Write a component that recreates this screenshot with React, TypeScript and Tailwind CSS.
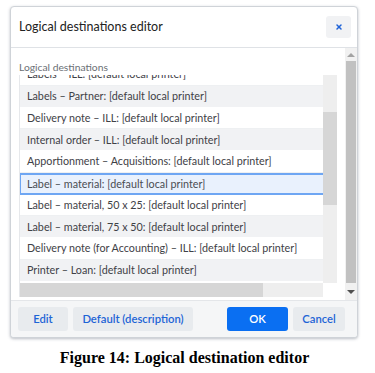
import { X } from "lucide-react";

const rows = [
  "Labels – ILL: [default local printer]",
  "Labels – Partner: [default local printer]",
  "Delivery note – ILL: [default local printer]",
  "Internal order – ILL: [default local printer]",
  "Apportionment – Acquisitions: [default local printer]",
  "Label – material: [default local printer]",
  "Label – material, 50 x 25: [default local printer]",
  "Label – material, 75 x 50: [default local printer]",
  "Delivery note (for Accounting) – ILL: [default local printer]",
  "Printer – Loan: [default local printer]",
];

const SELECTED = 5;

export default function App() {
  return (
    <div className="h-[373px] w-[375px] overflow-hidden bg-white font-['Lato',sans-serif]">
      <div className="pl-[10px] pt-[6px]">
        {/* Dialog */}
        <div className="flex h-[332px] w-[348px] flex-col overflow-hidden rounded-[4px] border border-[#cfd3d8] bg-white shadow-[0_1px_3px_rgba(60,70,90,0.35)]">
          {/* Header */}
          <div className="flex h-[41px] shrink-0 items-center justify-between border-b border-[#dfe2e6] pl-[8px] pr-[6px]">
            <span className="text-[12.5px] text-[#222222]">Logical destinations editor</span>
            <button className="flex h-[22px] w-[25px] items-center justify-center rounded-[3px] bg-[#f1f2f4]">
              <X className="h-[8px] w-[8px] text-[#1f63d8]" strokeWidth={4.5} />
            </button>
          </div>

          {/* Body */}
          <div className="flex h-[252px] shrink-0">
            <div className="flex-1 pl-[8px] pt-[13px]">
              <div className="h-[14px] text-[10.3px] leading-[13px] text-[#6b6f75]">Logical destinations</div>
              <div className="flex h-[222px] w-[318px] flex-col border-l border-[#e6e8eb]">
                <div className="flex h-[208px]">
                  <div className="w-[304px] overflow-hidden">
                    <div className="-mt-[11px]">
                      {rows.map((r, i) => (
                        <div
                          key={r}
                          className={
                            i === SELECTED
                              ? "flex h-[21.75px] items-center whitespace-nowrap border-y-2 border-l border-[#6ea6f3] bg-[#e9f1fd] pl-[6px] text-[10.75px] text-[#4a4d52]"
                              : i % 2 === 1
                                ? "flex h-[21.75px] items-center whitespace-nowrap border-b border-[#ffffff] bg-[#f1f2f4] pl-[7px] text-[10.75px] text-[#3e4146]"
                                : "flex h-[21.75px] items-center whitespace-nowrap border-b border-[#eef0f2] bg-white pl-[7px] text-[10.75px] text-[#3e4146]"
                          }
                        >
                          {r}
                        </div>
                      ))}
                    </div>
                  </div>
                  {/* inner vertical scrollbar */}
                  <div className="flex w-[14px] flex-col bg-[#eeeeee]">
                    <div className="h-[37px]" />
                    <div className="h-[93px] bg-[#d6d6d6]" />
                  </div>
                </div>
                {/* inner horizontal scrollbar */}
                <div className="flex h-[14px]">
                  <div className="w-[304px] bg-[#eeeeee]">
                    <div className="h-full w-[243px] bg-[#d6d6d6]" />
                  </div>
                  <div className="w-[14px] bg-white" />
                </div>
              </div>
            </div>
            {/* outer scrollbar */}
            <div className="flex w-[12px] flex-col items-center bg-[#f1f1f1]">
              <div className="flex h-[13px] items-center justify-center">
                <div className="h-0 w-0 border-x-[4px] border-b-[4px] border-x-transparent border-b-[#a3a3a3]" />
              </div>
              <div className="h-[222px] w-[10px] bg-[#c1c1c1]" />
              <div className="flex h-[17px] items-center justify-center">
                <div className="h-0 w-0 border-x-[4px] border-t-[4px] border-x-transparent border-t-[#505050]" />
              </div>
            </div>
          </div>

          {/* Footer */}
          <div className="flex flex-1 items-center border-t border-[#e4e6e9] bg-[#f5f6f7] pl-[7px] pr-[12px]">
            <div className="flex gap-[5px]">
              <button className="h-[24px] w-[50px] rounded-[3px] bg-[#e8ebee] text-[11.25px] font-semibold text-[#1d64d6]">Edit</button>
              <button className="h-[24px] w-[120px] rounded-[3px] bg-[#e8ebee] text-[11.25px] font-semibold text-[#1d64d6]">Default (description)</button>
            </div>
            <div className="ml-auto flex gap-[5px]">
              <button className="h-[24px] w-[61px] rounded-[3px] bg-[#0a6ff2] text-[11.25px] font-semibold text-white">OK</button>
              <button className="h-[24px] w-[52px] rounded-[3px] bg-[#e8ebee] text-[11.25px] font-semibold text-[#1d64d6]">Cancel</button>
            </div>
          </div>
        </div>
      </div>

      {/* Caption */}
      <div className="mt-[8px] pr-[6px] text-center font-['Liberation_Serif',serif] text-[16px] font-bold leading-[24px] text-black">
        Figure 14: Logical destination editor
      </div>
    </div>
  );
}
